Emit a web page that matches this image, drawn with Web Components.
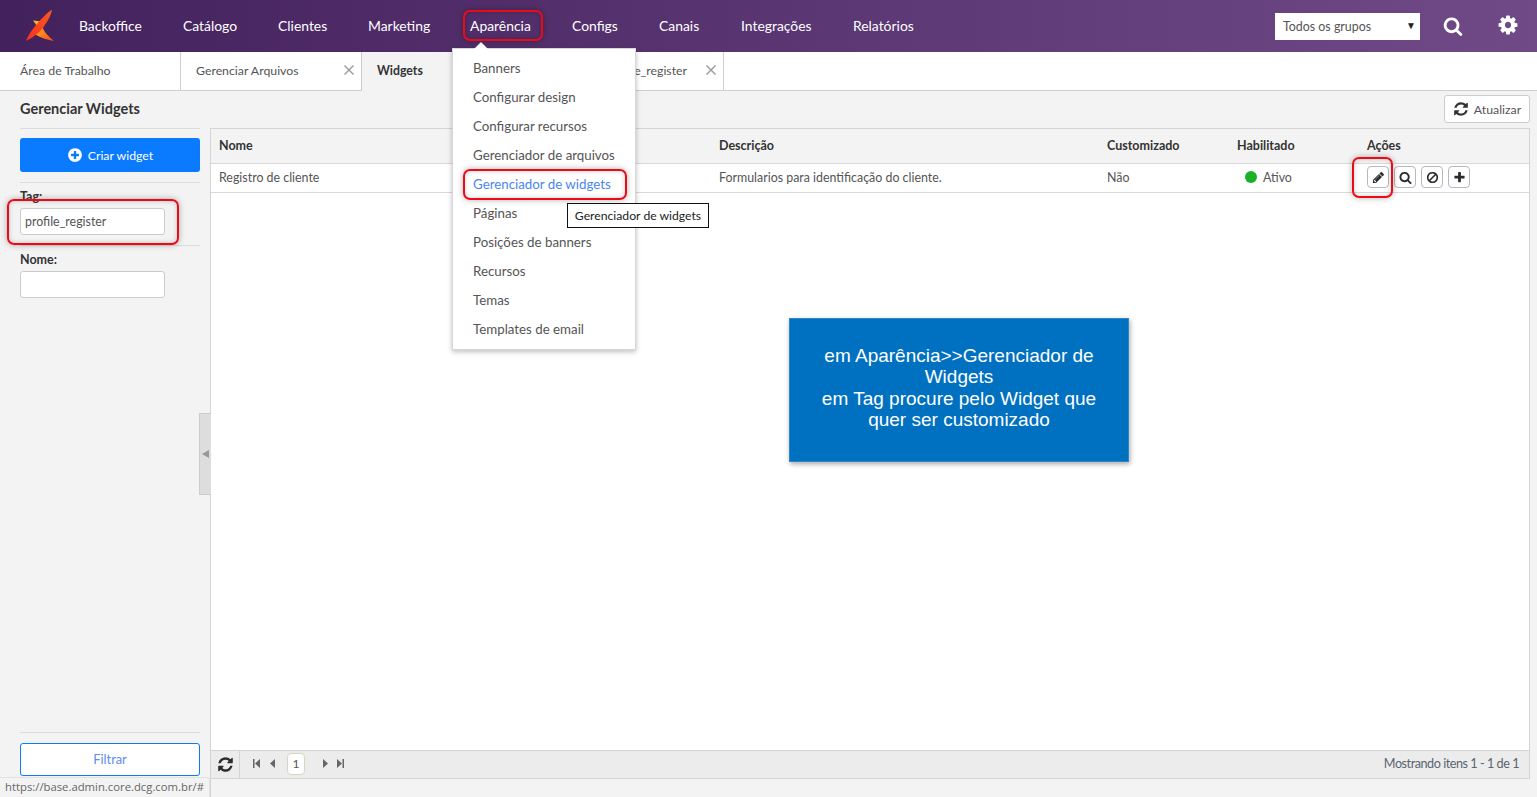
<!DOCTYPE html>
<html lang="pt-BR">
<head>
<meta charset="utf-8">
<title>Gerenciar Widgets</title>
<style>
  html, body { margin: 0; height: 100%; overflow: hidden; }
  body { font-family: Lato, "Noto Sans", sans-serif; font-size: 13px; color: #444; background: #f3f3f3; }
</style>
</head>
<body>
<admin-app></admin-app>

<script>
const ICONS = {
  refresh: 'M1639 1056q0 5-1 7-64 268-268 434.5t-478 166.5q-146 0-282.5-55t-243.5-157l-129 129q-19 19-45 19t-45-19-19-45v-448q0-26 19-45t45-19h448q26 0 45 19t19 45-19 45l-137 137q71 66 161 102t187 36q134 0 250-65t186-179q11-17 53-117 8-23 30-23h192q13 0 22.5 9.5t9.5 22.5zm25-800v448q0 26-19 45t-45 19h-448q-26 0-45-19t-19-45 19-45l138-138q-148-137-349-137-134 0-250 65t-186 179q-11 17-53 117-8 23-30 23h-199q-13 0-22.5-9.5t-9.5-22.5v-7q65-268 270-434.5t480-166.5q146 0 284 55.5t245 156.5l130-129q19-19 45-19t45 19 19 45z',
  cog: 'M1152 896q0-106-75-181t-181-75-181 75-75 181 75 181 181 75 181-75 75-181zm512-109v222q0 12-8 23t-20 13l-185 28q-19 54-39 91 35 50 107 138 10 12 10 25t-9 23q-27 37-99 108t-94 71q-12 0-26-9l-138-108q-44 23-91 38-16 136-29 186-7 28-36 28h-222q-14 0-24.5-8.5t-11.5-21.5l-28-184q-49-16-90-37l-141 107q-10 9-25 9-14 0-25-11-126-114-165-168-7-10-7-23 0-12 8-23 15-21 51-66.5t54-70.5q-27-50-41-99l-183-27q-13-2-21-12.5t-8-23.5v-222q0-12 8-23t19-13l186-28q14-46 39-92-40-57-107-138-10-12-10-24 0-10 9-23 26-36 98.5-107.5t94.5-71.5q13 0 26 10l138 107q44-23 91-38 16-136 29-186 7-28 36-28h222q14 0 24.5 8.5t11.5 21.5l28 184q49 16 90 37l142-107q9-9 24-9 13 0 25 10 129 119 165 170 7 8 7 22 0 12-8 23-15 21-51 66.5t-54 70.5q26 50 41 98l183 28q13 2 21 12.5t8 23.5z',
  pencil: 'M491 1536l91-91-235-235-91 91v107h128v128h107zm523-928q0-22-22-22-10 0-17 7l-542 542q-7 7-7 17 0 22 22 22 10 0 17-7l542-542q7-7 7-17zm-54-192l416 416-832 832h-416v-416zm683 96q0 53-37 90l-166 166-416-416 166-165q36-38 90-38 53 0 91 38l235 234q37 39 37 91z',
  search: 'M1216 832q0-185-131.5-316.5t-316.5-131.5-316.5 131.5-131.5 316.5 131.5 316.5 316.5 131.5 316.5-131.5 131.5-316.5zm512 832q0 52-38 90t-90 38q-54 0-90-38l-343-342q-179 124-399 124-143 0-273.5-55.5t-225-150-150-225-55.5-273.5 55.5-273.5 150-225 225-150 273.5-55.5 273.5 55.5 225 150 150 225 55.5 273.5q0 220-124 399l343 343q37 37 37 90z',
  ban: 'M1440 893q0-161-87-295l-754 753q137 89 297 89 111 0 211.5-43.5t173.5-116.5 116-174.5 43-212.5zm-999 299l755-754q-135-91-300-91-148 0-273 73t-198 199-73 274q0 162 89 299zm1223-299q0 157-61 300t-163.5 246-245 164-298.5 61-298.5-61-245-164-163.5-246-61-300 61-299.5 163.5-245.5 245-164 298.5-61 298.5 61 245 164 163.5 245.5 61 299.5z',
  plus: 'M1600 736v192q0 40-28 68t-68 28h-416v416q0 40-28 68t-68 28h-192q-40 0-68-28t-28-68v-416h-416q-40 0-68-28t-28-68v-192q0-40 28-68t68-28h416v-416q0-40 28-68t68-28h192q40 0 68 28t28 68v416h416q40 0 68 28t28 68z',
  pluscircle: 'M1344 960v-128q0-26-19-45t-45-19h-256v-256q0-26-19-45t-45-19h-128q-26 0-45 19t-19 45v256h-256q-26 0-45 19t-19 45v128q0 26 19 45t45 19h256v256q0 26 19 45t45 19h128q26 0 45-19t19-45v-256h256q26 0 45-19t19-45zm320-64q0 209-103 385.5t-279.5 279.5-385.5 103-385.5-103-279.5-279.5-103-385.5 103-385.5 279.5-279.5 385.5-103 385.5 103 279.5 279.5 103 385.5z'
};

class FaIcon extends HTMLElement {
  connectedCallback() {
    const size = this.getAttribute('size') || 14;
    this.attachShadow({ mode: 'open' }).innerHTML = `
      <style>
        :host { display: inline-flex; width: ${size}px; height: ${size}px; }
        svg { width: 100%; height: 100%; fill: currentColor; display: block; }
      </style>
      <svg viewBox="0 0 1792 1792"><path d="${ICONS[this.getAttribute('name')]}"/></svg>`;
  }
}

class TopBar extends HTMLElement {
  connectedCallback() {
    const items = [['Backoffice', 104], ['Catálogo', 95], ['Clientes', 90], ['Marketing', 102],
      ['Aparência', 102], ['Configs', 87], ['Canais', 82], ['Integrações', 112], ['Relatórios', 90]];
    this.attachShadow({ mode: 'open' }).innerHTML = `
      <style>
        :host { display: flex; align-items: center; height: 52px; flex: none; color: #fff;
          background: linear-gradient(90deg, #43215c 0%, #6f4a87 100%); }
        .logo { width: 79px; height: 52px; flex: none; display: block; }
        nav { display: flex; font-size: 13.9px; flex: 1; padding-bottom: 1px; }
        nav span { display: block; }
        .group { width: 145px; height: 27px; box-sizing: border-box; background: #fff; color: #555;
          font-size: 12.4px; display: flex; align-items: center; justify-content: space-between;
          padding: 0 4px 0 8px; margin-right: 23px; }
        .group i { font-style: normal; font-size: 10px; color: #222; margin-top: -3px; }
        .search { margin: -1px 34px 0 0; width: 20px; height: 20px; }
        .cog { margin-right: 18px; margin-top: -3px; }
      </style>
      <svg class="logo" viewBox="0 0 79 52">
        <defs>
          <linearGradient id="a" x1="0" y1="1" x2="1" y2="0">
            <stop offset="0" stop-color="#f7301e"/><stop offset="1" stop-color="#fa5a20"/>
          </linearGradient>
          <linearGradient id="b" x1="0" y1="0" x2="1" y2="1">
            <stop offset="0" stop-color="#fdc51f"/><stop offset=".5" stop-color="#fb8a20"/><stop offset="1" stop-color="#f8431e"/>
          </linearGradient>
        </defs>
        <path fill="url(#b)" d="M33 20.5L42 21.5C41 27 44 33 54 41C48 40 41 38 36 35C38 29 37 25 33 20.5Z"/>
        <path fill="url(#a)" d="M52 9.5C47 13 41 19 37 24C32 30 28 35 26 41C32 38 39 33 43 28C47 22 51 16 52 9.5Z"/>
      </svg>
      <nav>${items.map(([t, w]) => `<span style="width:${w}px">${t}</span>`).join('')}</nav>
      <div class="group"><span>Todos os grupos</span><i>▼</i></div>
      <fa-icon class="search" name="search" size="20"></fa-icon>
      <fa-icon class="cog" name="cog" size="22"></fa-icon>`;
  }
}

class TabStrip extends HTMLElement {
  connectedCallback() {
    this.attachShadow({ mode: 'open' }).innerHTML = `
      <style>
        :host { display: flex; height: 39px; flex: none; background: #fff; box-sizing: border-box;
          border-bottom: 1px solid #cfcfcf; font-size: 12.3px; color: #555; }
        .tab { width: 181px; box-sizing: border-box; border-right: 1px solid #d0d0d0; display: flex;
          align-items: center; padding: 0 0 1px 15px; position: relative; }
        .tab:first-of-type { padding-left: 20px; }
        .on { background: #f3f3f3; font-weight: 700; color: #333; margin-bottom: -1px; padding-bottom: 2px;
          border-left: 1px solid #ccc; margin-left: -1px; width: 182px; }
        .end { justify-content: flex-end; padding-right: 36px; }
        .x { position: absolute; right: 7px; top: 13px; width: 10px; height: 10px; }
        .x path { stroke: #999; stroke-width: 1.4; fill: none; }
      </style>
      <div class="tab">Área de Trabalho</div>
      <div class="tab">Gerenciar Arquivos<svg class="x" viewBox="0 0 10 10"><path d="M.5.5l9 9M9.5.5l-9 9"/></svg></div>
      <div class="tab on">Widgets</div>
      <div class="tab end">profile_register<svg class="x" viewBox="0 0 10 10"><path d="M.5.5l9 9M9.5.5l-9 9"/></svg></div>`;
  }
}

class FilterPanel extends HTMLElement {
  connectedCallback() {
    this.attachShadow({ mode: 'open' }).innerHTML = `
      <style>
        :host { display: flex; flex-direction: column; width: 211px; flex: none; box-sizing: border-box;
          border-right: 1px solid #d4d4d4; padding: 0 10px 21px 20px; position: relative; }
        .create { height: 34px; border-radius: 3px; background: #0a7bff; color: #fff; display: flex; flex: none;
          align-items: center; justify-content: center; gap: 5px; font-size: 12.3px; }
        hr { border: 0; border-top: 1px solid #dcdcdc; margin: 0; flex: none; }
        label { display: block; font-weight: 700; color: #333; font-size: 12.5px; line-height: 15px; }
        .box { width: 145px; height: 27px; box-sizing: border-box; background: #fff; border: 1px solid #ccc;
          border-radius: 3px; padding: 0 4px; display: flex; align-items: center; color: #555; font-size: 12.4px; margin-top: 4px; }
        .grow { flex: 1; }
        .go { height: 33px; flex: none; box-sizing: border-box; border: 1px solid #0a7bff; border-radius: 3px; background: #fff;
          color: #5b8def; display: flex; align-items: center; justify-content: center; font-size: 12.8px; padding-bottom: 2px; }
        .handle { position: absolute; left: 199px; top: 285px; width: 12px; height: 82px; box-sizing: border-box;
          background: #ddd; border: 1px solid #ccc; border-right: 0; display: flex; align-items: center; justify-content: center; }
        .handle svg { width: 7px; height: 8px; fill: #999; }
      </style>
      <hr style="margin-bottom:9px">
      <div class="create"><fa-icon name="pluscircle" size="16"></fa-icon><span>Criar widget</span></div>
      <hr style="margin:10px 0 6px">
      <label>Tag:</label>
      <div class="box">profile_register</div>
      <hr style="margin:10px 0 6px">
      <label>Nome:</label>
      <div class="box"></div>
      <div class="grow"></div>
      <hr style="margin-bottom:10px">
      <div class="go">Filtrar</div>
      <div class="handle"><svg viewBox="0 0 7 8"><path d="M0 4l7-4v8z"/></svg></div>`;
  }
}

class WidgetGrid extends HTMLElement {
  connectedCallback() {
    const cols = 'grid-template-columns: 500px 388px 130px 130px 1fr;';
    this.attachShadow({ mode: 'open' }).innerHTML = `
      <style>
        :host { display: flex; flex-direction: column; flex: 1; margin: 0 7px 18px 0; box-sizing: border-box;
          border: 1px solid #d4d4d4; border-left: 0; background: #fff; min-width: 0; }
        .row { display: grid; ${cols} align-items: center; border-bottom: 1px solid #d9d9d9; flex: none; }
        .row > * { padding-left: 8px; }
        .head { height: 35px; box-sizing: border-box; background: #f3f3f3; font-weight: 700; color: #333; font-size: 12.5px; padding-bottom: 2px; }
        .body { height: 29px; box-sizing: border-box; font-size: 12.4px; color: #555; }
        .body > div { margin-bottom: 2px; }
        .row > .state { display: flex; align-items: center; gap: 6px; padding-left: 16px; }
        .dot { width: 12px; height: 12px; border-radius: 50%; background: #1cb02a; }
        .acts { display: flex; gap: 5px; }
        .act { width: 22px; height: 22px; box-sizing: border-box; border: 1px solid #b4b9bf; border-radius: 4px;
          display: flex; align-items: center; justify-content: center; color: #2b2b2b; background: #fff; }
        .spacer { flex: 1; }
        .foot { display: flex; align-items: center; height: 28px; flex: none; box-sizing: border-box; background: #ececec; border-top: 1px solid #d4d4d4; color: #666; }
        .reload { width: 29px; height: 27px; box-sizing: border-box; border-right: 1px solid #d4d4d4; display: flex;
          align-items: center; justify-content: center; color: #2b2b2b; }
        .pager { display: flex; align-items: center; padding-left: 12px; margin-bottom: 2px; }
        .pg { display: block; width: 9px; height: 9px; fill: #666; }
        .num { width: 18px; height: 22px; box-sizing: border-box; border: 1px solid #d6d6c2; border-radius: 4px; background: #fff;
          display: flex; align-items: center; justify-content: center; font-size: 12px; color: #555; margin: 0 16px 0 10px; }
        .count { margin: 0 0 2px auto; padding-right: 10px; font-size: 12.6px; letter-spacing: -.45px; color: #5a6470; }
      </style>
      <div class="row head"><div>Nome</div><div>Descrição</div><div>Customizado</div><div>Habilitado</div><div>Ações</div></div>
      <div class="row body">
        <div>Registro de cliente</div>
        <div>Formularios para identificação do cliente.</div>
        <div>Não</div>
        <div class="state"><span class="dot"></span><span>Ativo</span></div>
        <div class="acts">
          <div class="act"><fa-icon name="pencil" size="13"></fa-icon></div>
          <div class="act"><fa-icon name="search" size="13"></fa-icon></div>
          <div class="act"><fa-icon name="ban" size="13"></fa-icon></div>
          <div class="act"><fa-icon name="plus" size="13"></fa-icon></div>
        </div>
      </div>
      <div class="spacer"></div>
      <div class="foot">
        <div class="reload"><fa-icon name="refresh" size="17"></fa-icon></div>
        <div class="pager">
          <svg class="pg" viewBox="0 0 9 9"><path d="M1 0h1.5v9H1zM8 0v9L3 4.5z"/></svg>
          <svg class="pg" style="margin-left:7px" viewBox="0 0 9 9"><path d="M7 0v9L2 4.5z"/></svg>
          <div class="num">1</div>
          <svg class="pg" viewBox="0 0 9 9"><path d="M2 0v9l5-4.5z"/></svg>
          <svg class="pg" style="margin-left:6px" viewBox="0 0 9 9"><path d="M1 0v9l5-4.5zM6.5 0H8v9H6.5z"/></svg>
        </div>
        <div class="count">Mostrando itens 1 - 1 de 1</div>
      </div>`;
  }
}

class DropMenu extends HTMLElement {
  connectedCallback() {
    const items = ['Banners', 'Configurar design', 'Configurar recursos', 'Gerenciador de arquivos',
      'Gerenciador de widgets', 'Páginas', 'Posições de banners', 'Recursos', 'Temas', 'Templates de email'];
    this.attachShadow({ mode: 'open' }).innerHTML = `
      <style>
        :host { position: absolute; left: 452px; top: 48px; width: 184px; box-sizing: border-box; padding: 5px 0 5px;
          background: #fff; border: 1px solid #d6d6d6; box-shadow: 0 2px 5px rgba(0,0,0,.25); font-size: 13.3px; color: #555; }
        :host::before { content: ""; position: absolute; left: 21px; top: -7px; border: 7px solid transparent;
          border-top: 0; border-bottom-color: #fff; }
        div { height: 29px; line-height: 29px; padding-left: 20px; }
        .on { color: #4a86f0; }
      </style>
      ${items.map(t => `<div class="${t === 'Gerenciador de widgets' ? 'on' : ''}">${t}</div>`).join('')}`;
  }
}

class HintBox extends HTMLElement {
  connectedCallback() {
    this.attachShadow({ mode: 'open' }).innerHTML = `
      <style>
        :host { position: absolute; left: 567px; top: 203px; width: 142px; height: 25px; box-sizing: border-box; background: #fff;
          border: 1px solid #111; display: flex; align-items: center; justify-content: center; font-size: 12.2px; color: #222; white-space: nowrap; }
      </style><slot></slot>`;
  }
}

class RedRing extends HTMLElement {
  connectedCallback() {
    const [x, y, w, h] = this.getAttribute('box').split(' ');
    this.attachShadow({ mode: 'open' }).innerHTML = `
      <style>
        :host { position: absolute; left: ${x}px; top: ${y}px; width: ${w}px; height: ${h}px; box-sizing: border-box;
          border: 2px solid #ee0a14; border-radius: 7px; box-shadow: 0 0 6px rgba(0,0,0,.3), inset 0 0 5px rgba(0,0,0,.2); }
      </style>`;
  }
}

class NoteCard extends HTMLElement {
  connectedCallback() {
    this.attachShadow({ mode: 'open' }).innerHTML = `
      <style>
        :host { position: absolute; left: 789px; top: 318px; width: 340px; height: 144px; box-sizing: border-box; padding: 0 20px 5px;
          background: #0070c0; border: 1px solid #2f86c8; box-shadow: 1px 2px 5px rgba(0,0,0,.35); color: #fff; display: flex; align-items: center;
          justify-content: center; text-align: center; font: 19px/21.3px "Liberation Sans", Arial, sans-serif; }
      </style><div><slot></slot></div>`;
  }
}

class StatusTip extends HTMLElement {
  connectedCallback() {
    this.attachShadow({ mode: 'open' }).innerHTML = `
      <style>
        :host { position: absolute; left: 0; bottom: 0; width: 210px; height: 20px; box-sizing: border-box; padding-left: 5px;
          background: #f3f3f3; border-radius: 0 4px 0 0; border-top: 1px solid #e2e2e2; border-right: 1px solid #e2e2e2;
          font-family: "Open Sans", sans-serif; font-size: 11.3px; line-height: 18px; color: #666; white-space: nowrap; }
      </style><slot></slot>`;
  }
}

class AdminApp extends HTMLElement {
  connectedCallback() {
    this.attachShadow({ mode: 'open' }).innerHTML = `
      <style>
        :host { display: flex; flex-direction: column; height: 797px; position: relative; overflow: hidden; }
        .tools { height: 37px; flex: none; box-sizing: border-box; display: flex; justify-content: space-between; padding: 4px 7px 0 20px; }
        h1 { font-size: 14.5px; line-height: 20px; margin: 4px 0 0; color: #333; font-weight: 700; }
        main { display: flex; flex: 1; min-height: 0; }
        .update { width: 86px; height: 28px; box-sizing: border-box; background: #fff; border: 1px solid #ccc; border-radius: 3px;
          display: flex; align-items: center; justify-content: center; gap: 5px; color: #555; font-size: 12.3px; }
        .update fa-icon { color: #333; }
      </style>
      <top-bar></top-bar>
      <tab-strip></tab-strip>
      <div class="tools">
        <h1>Gerenciar Widgets</h1>
        <div class="update"><fa-icon name="refresh" size="16"></fa-icon><span>Atualizar</span></div>
      </div>
      <main>
        <filter-panel></filter-panel>
        <widget-grid></widget-grid>
      </main>
      <drop-menu></drop-menu>
      <hint-box>Gerenciador de widgets</hint-box>
      <red-ring box="463 10 80 31"></red-ring>
      <red-ring box="463 169 164 31"></red-ring>
      <red-ring box="7 199 172 46"></red-ring>
      <red-ring box="1352 157 41 41"></red-ring>
      <note-card>em Aparência&gt;&gt;Gerenciador de Widgets<br>em Tag procure pelo Widget que quer ser customizado</note-card>
      <status-tip>https://base.admin.core.dcg.com.br/#</status-tip>`;
  }
}

customElements.define('fa-icon', FaIcon);
customElements.define('top-bar', TopBar);
customElements.define('tab-strip', TabStrip);
customElements.define('filter-panel', FilterPanel);
customElements.define('widget-grid', WidgetGrid);
customElements.define('drop-menu', DropMenu);
customElements.define('hint-box', HintBox);
customElements.define('red-ring', RedRing);
customElements.define('note-card', NoteCard);
customElements.define('status-tip', StatusTip);
customElements.define('admin-app', AdminApp);
</script>
</body>
</html>
